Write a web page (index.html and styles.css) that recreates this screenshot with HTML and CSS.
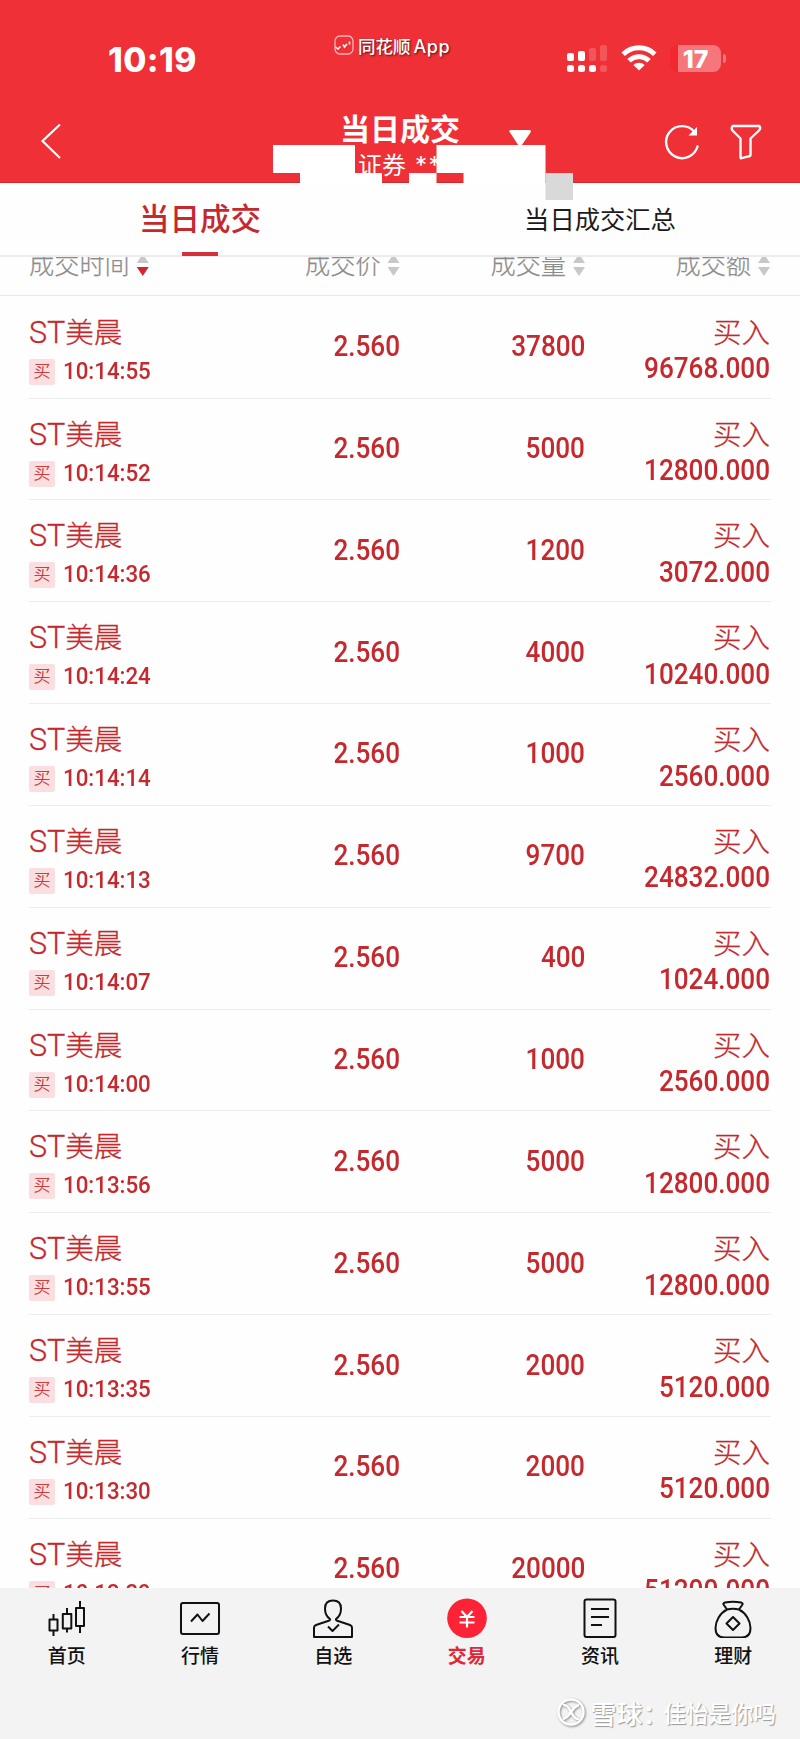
FILE: index.html
```html
<!doctype html>
<html lang="zh-CN">
<head>
    <meta charset="UTF-8">
    <meta name="viewport" content="width=device-width, initial-scale=1.0">
    <title>当日成交</title>
    <link rel="stylesheet" href="styles.css">
</head>
<body>
    <header>
        <div class="status-bar">
            <div class="clock">10:19</div>
            <div class="app-name">
                <svg width="20" height="20" viewBox="0 0 20 20"><rect x="1" y="1" width="18" height="18" rx="5" fill="none" stroke="#fff" stroke-opacity=".65" stroke-width="1.3"/><path d="M1.500 12l2.500 2 2.500-2.500M9 9.500l1.500 2.500 2.500-3M15.500 6.500v3" fill="none" stroke="#fff" stroke-width="1.600"/></svg>
                <span>同花顺<b>App</b></span>
            </div>
            <div class="status-icons">
                <svg width="40" height="28" viewBox="0 0 40 28">
                    <g fill="#fff">
                        <rect x="0" y="8" width="7" height="8" rx="2"/><rect x="11" y="6" width="7" height="10" rx="2"/>
                        <rect x="0" y="20" width="7" height="7" rx="2.500"/><rect x="11" y="20" width="7" height="7" rx="2.500"/><rect x="22" y="20" width="7" height="7" rx="2.500"/>
                        <g opacity=".18"><rect x="22" y="3" width="7" height="13" rx="2"/><rect x="33" y="0" width="7" height="16" rx="2"/><rect x="33" y="20" width="7" height="7" rx="2.500"/></g>
                    </g>
                </svg>
                <svg class="wifi" width="36" height="26" viewBox="0 0 36 26">
                    <g fill="none" stroke="#fff" stroke-width="5"><path d="M2.200 9.300a22.500 22.500 0 0 1 31.600 0"/><path d="M8 15.800a14.300 14.300 0 0 1 20 0"/></g>
                    <path d="M12.300 20a8.200 8.200 0 0 1 11.400 0L18 25.600z" fill="#fff"/>
                </svg>
                <div class="battery"><span>17</span></div>
            </div>
        </div>
        <div class="title-bar">
            <svg class="back" width="22" height="38" viewBox="0 0 22 38"><path d="M20 2.500L2.500 19 20 36" fill="none" stroke="#fff" stroke-width="2.200"/></svg>
            <div class="title">
                <h1>当日成交</h1>
                <p>证券<span>**</span></p>
            </div>
            <!-- account dropdown arrow and the blocks that hide the account name -->
            <svg class="mask" width="300" height="92" viewBox="0 0 300 92">
                <path d="M237 22.500q-2-2.500 1-2.500h18q3 0 1.500 2.500l-9 13h-3z" fill="#fff"/>
                <path d="M0 35h82v28h27v10H27V63H0zM163.500 35h109v38h-82V63h-27zM136 63h27.500v10H136z" fill="#fff"/>
                <path d="M272.500 63H300v27h-27.500z" fill="#d9d9d9"/>
            </svg>
            <div class="tools">
                <svg width="36" height="36" viewBox="0 0 36 36"><path d="M33.500 22.500A16 16 0 1 1 30.500 8" fill="none" stroke="#fff" stroke-width="2.400" stroke-linecap="round"/><path d="M33 3v8.500h-8.500z" fill="#fff"/></svg>
                <svg width="32" height="36" viewBox="0 0 32 36"><path d="M2.500 2h27q1.500 2.500-.5 4.500l-8.500 8V31q0 1-1 1.200l-8 2q-1 .2-1-1V14.500L2.500 6.500Q1 4.500 2.500 2z" fill="none" stroke="#fff" stroke-width="2.400" stroke-linejoin="round"/></svg>
            </div>
        </div>
    </header>

    <nav class="tabs">
        <a class="active">当日成交</a>
        <a>当日成交汇总</a>
    </nav>

    <main>
        <div class="columns">
            <span class="desc">成交时间<i></i></span>
            <span>成交价<i></i></span>
            <span>成交量<i></i></span>
            <span>成交额<i></i></span>
        </div>
        <div id="deals"></div>
    </main>

    <footer>
        <div class="menu">
            <a>
                <svg width="40" height="40" viewBox="0 0 40 40"><g class="line"><path d="M2.500 21.500h8v11h-8zM15.800 16h8.500v14.500h-8.500zM29 10h8v18h-8zM6.500 16v5.500M6.500 32.500V38M20 10v6M20 30.500v4M33 3v7M33 28v7"/></g></svg>
                首页
            </a>
            <a>
                <svg width="40" height="40" viewBox="0 0 40 40"><g class="line"><rect x="1" y="5" width="38" height="31" rx="2"/><path d="M11 23.500l6.500-7 5 6.500 7-7.500"/></g></svg>
                行情
            </a>
            <a>
                <svg width="40" height="40" viewBox="0 0 40 40"><g class="line"><path d="M17 21c-3-2-5-6-5-10.500C12 5.500 15 2.500 20 2.500s8 3 8 8c0 4.500-2 8.500-5 10.500-.5 1 .5 1.500 2 2l12 4q2 .8 2 2.500V39H1v-9.500q0-1.700 2-2.500l12-4c1.500-.5 2.500-1 2-2z"/><path d="M15 28.500l4.500 4.500 6.500-6.500"/></g></svg>
                自选
            </a>
            <a class="active">
                <svg width="40" height="40" viewBox="0 0 40 40"><circle cx="20" cy="20.200" r="19.800" fill="#fd2336"/><path d="M14.500 13l5.500 6 5.500-6M12.500 19h15M12.500 24.500h15M20 19v10.500" fill="none" stroke="#fff" stroke-width="2.200"/></svg>
                交易
            </a>
            <a>
                <svg width="40" height="40" viewBox="0 0 40 40"><g class="line"><rect x="4.500" y="1.500" width="31" height="37.500" rx="2"/><path d="M11 11h18M11 19h18M11 27h11"/></g></svg>
                资讯
            </a>
            <a>
                <svg width="40" height="40" viewBox="0 0 40 40"><g class="line"><path d="M14 11.500L10.500 6.500Q10 5 12 4.500q8-1.500 16 0 2 .5 1.500 2L26 11.500M14 11.500q6-1.500 12 0C33 15 37.500 23 37.500 30q0 9.500-9 9.500h-17q-9 0-9-9.500c0-7 4.500-15 11.500-18.500z"/><path d="M20 19l6.500 6.500L20 32l-6.500-6.500z"/></g></svg>
                理财
            </a>
        </div>
        <div class="watermark">
            <svg width="28" height="28" viewBox="0 0 28 28"><g fill="none" stroke="#fff" stroke-width="2.400"><circle cx="14" cy="14" r="12.500"/><path d="M6 7q4-1 8 7t8 7M22 7q-4 1-8 7t-8 7"/></g></svg>
            <span class="site">雪球：</span><span class="user">佳怡是你吗</span>
        </div>
    </footer>

    <script>
        const deals = [
            ["10:14:55", "37800", "96768.000"],
            ["10:14:52", "5000", "12800.000"],
            ["10:14:36", "1200", "3072.000"],
            ["10:14:24", "4000", "10240.000"],
            ["10:14:14", "1000", "2560.000"],
            ["10:14:13", "9700", "24832.000"],
            ["10:14:07", "400", "1024.000"],
            ["10:14:00", "1000", "2560.000"],
            ["10:13:56", "5000", "12800.000"],
            ["10:13:55", "5000", "12800.000"],
            ["10:13:35", "2000", "5120.000"],
            ["10:13:30", "2000", "5120.000"],
            ["10:13:29", "20000", "51200.000"]
        ];

        document.querySelector("#deals").innerHTML = deals.map(([time, volume, amount]) => `
            <div class="deal">
                <div class="stock">
                    <div class="name"><span>ST</span>美晨</div>
                    <div class="time"><em>买</em><span class="num">${time}</span></div>
                </div>
                <div class="value"><span class="num">2.560</span></div>
                <div class="value"><span class="num">${volume}</span></div>
                <div class="total">
                    <div class="name">买入</div>
                    <span class="num">${amount}</span>
                </div>
            </div>`).join("");
    </script>
</body>
</html>
```

FILE: styles.css
```css
:root {
    --cl-header: #ef3037;
    --cl-red: #c5282d;
    --cl-line: #e8e8e8;
    --cl-muted: #8c8c8c;
}

* {
    box-sizing: border-box;
}

html, body {
    margin: 0;
    padding: 0;
    width: 800px;
    height: 1739px;
    overflow: hidden;
}

body {
    display: grid;
    grid-template-rows: 183px 74px 1331px 151px;
    background: #fefefe;
    font-family: Inter, "Noto Sans CJK SC", sans-serif;
}

svg {
    display: block;
    flex: none;
}

header {
    position: relative;
    z-index: 1;
    background: var(--cl-header);
    border-bottom: solid 1px #cf2a30;
    color: white;
}

.status-bar {
    display: grid;
    grid-template-columns: 334px 233px 1fr;
    height: 110px;
}

.clock {
    padding: 41px 0 0 108px;
    font-size: 33.5px;
    line-height: 38px;
    font-weight: 800;
    letter-spacing: 0.4px;
}

.app-name {
    display: flex;
    gap: 4px;
    height: 24px;
    margin-top: 34.5px;
    font-size: 17.5px;
    line-height: 24px;
    font-weight: 500;
    text-shadow: 1px 1px 2px #5b1015;
}

.app-name b {
    font-weight: 500;
    font-size: 18px;
    letter-spacing: 0.6px;
    margin-left: 3px;
}

.status-icons {
    display: flex;
    padding-top: 45px;
}

.wifi {
    margin: 0 13px 0 14px;
}

.battery {
    position: relative;
    width: 51px;
    height: 27px;
    border-radius: 8px;
    background: linear-gradient(90deg, #f3282f 8px, #f6777b 8px);
    font-size: 25px;
    line-height: 28px;
    font-weight: 800;
    text-align: center;
}

.battery::after {
    content: "";
    position: absolute;
    right: -5px;
    top: 9px;
    width: 3px;
    height: 9px;
    border-radius: 0 4px 4px 0;
    background: #f6777b;
}

.title-bar {
    display: flex;
    height: 71px;
    justify-content: space-between;
    padding: 0 38px 0 40px;
}

.back {
    margin-top: 12px;
}

.title {
    width: 240px;
    margin-left: 218px;
    margin-right: 144px;
    text-align: center;
}

h1 {
    margin: 0;
    font-size: 30px;
    line-height: 38px;
    font-weight: 700;
}

p {
    margin: 0;
    font-size: 24px;
    line-height: 35px;
}

p span {
    margin-left: 9px;
    letter-spacing: 1.5px;
}

.mask {
    position: absolute;
    left: 273px;
    top: 110px;
}

.tools {
    display: flex;
    gap: 30px;
    padding-top: 14px;
}

.tabs {
    display: grid;
    grid-template-columns: 1fr 1fr;
    border-bottom: solid 2px #ececec;
    background: #fefefe;
    text-align: center;
    font-size: 25.3px;
    line-height: 74px;
    color: #1c1c1c;
}

.tabs .active {
    position: relative;
    font-size: 30.5px;
    font-weight: 500;
    line-height: 72px;
    color: var(--cl-red);
}

.tabs .active::after {
    content: "";
    position: absolute;
    left: 182px;
    top: 69px;
    width: 36px;
    height: 4px;
    background: #d2303a;
}

main {
    overflow: hidden;
}

.columns, .deal {
    display: grid;
    grid-template-columns: 185px 185.5px 185.5px 185px;
}

.columns {
    height: 39px;
    padding: 0 29px;
    border-bottom: solid 1px var(--cl-line);
    color: var(--cl-muted);
    font-size: 25.2px;
    font-weight: 300;
    line-height: 36px;
    -webkit-text-stroke: 0.25px;
}

.columns span {
    display: flex;
    justify-content: flex-end;
    gap: 7px;
    margin-top: -10px;
}

.columns .desc {
    justify-content: flex-start;
}

.columns i {
    display: flex;
    flex-direction: column;
    gap: 4px;
    padding-top: 7px;
}

.columns i::before, .columns i::after {
    content: "";
    width: 12px;
    height: 9px;
    background: #c8c8c8;
    clip-path: polygon(50% 0, 100% 100%, 0 100%);
}

.columns i::after {
    clip-path: polygon(0 0, 100% 0, 50% 100%);
}

.columns .desc i::after {
    background: #d5262d;
}

#deals {
    padding-top: 0.7px;
}

.deal {
    height: 101.85px;
    margin: 0 29px;
    border-bottom: solid 1px #ededed;
    color: var(--cl-red);
}

.name {
    font-size: 28.5px;
    font-weight: 300;
    line-height: 40px;
    -webkit-text-stroke: 0.3px;
}

.name span {
    font-family: Roboto, sans-serif;
    font-size: 30.5px;
}

.stock {
    padding-top: 16px;
}

.time {
    display: flex;
    gap: 7.5px;
    align-items: center;
    height: 36px;
}

.time em {
    width: 26px;
    height: 26px;
    margin-top: 2px;
    border-radius: 2px;
    background: #fbdfe0;
    font-size: 17px;
    font-style: normal;
    font-weight: 300;
    line-height: 25px;
    text-align: center;
    -webkit-text-stroke: 0.2px;
}

.num {
    display: inline-block;
    font-family: Roboto, sans-serif;
    font-size: 29px;
    font-weight: 500;
    line-height: 34px;
    transform: scaleX(0.9);
    transform-origin: right;
}

.time .num {
    font-size: 24.5px;
    transform: scaleX(0.91);
    transform-origin: left;
}

.value, .total {
    text-align: right;
}

.value {
    padding-top: 32.4px;
}

.total {
    padding-top: 16px;
}

.total .num {
    display: block;
    margin-top: -1.5px;
}

footer {
    background: #f3f3f3;
}

.menu {
    display: grid;
    grid-template-columns: repeat(6, 1fr);
    padding-top: 10px;
    font-size: 19px;
    font-weight: 500;
    line-height: 34px;
    color: #111;
}

.menu a {
    display: flex;
    flex-direction: column;
    align-items: center;
    gap: 2px;
}

.menu .active {
    color: #e12638;
    font-weight: 700;
}

.line {
    fill: none;
    stroke: #111;
    stroke-width: 2;
    stroke-linejoin: round;
}

.watermark {
    display: flex;
    align-items: center;
    justify-content: flex-end;
    padding: 16px 24px 0 0;
    height: 60px;
    color: white;
    font-size: 26px;
    font-weight: 500;
    text-shadow: 1px 1px 1px #999;
}

.watermark svg {
    margin-right: 5px;
    filter: drop-shadow(1px 1px 1px #888);
}

.watermark .site {
    margin-right: -5px;
}

.watermark .user {
    font-size: 22.5px;
}
```
